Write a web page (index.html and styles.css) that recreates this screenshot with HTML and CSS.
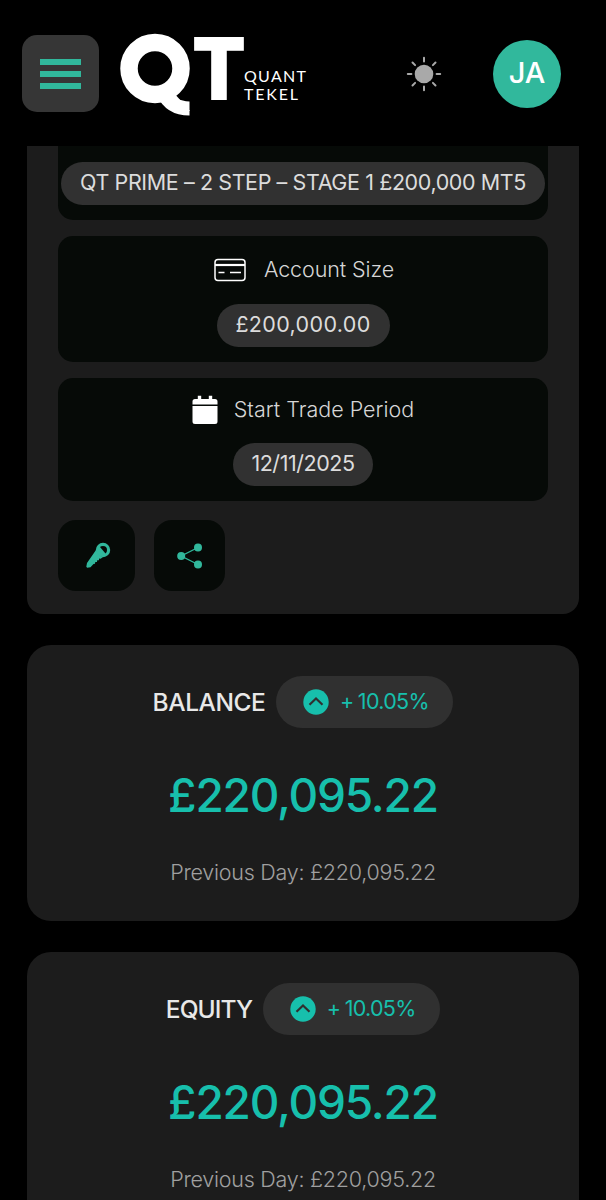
FILE: index.html
```html
<!DOCTYPE html>
<html lang="en">

<head>
    <meta charset="UTF-8">
    <meta name="viewport" content="width=device-width, initial-scale=1.0">
    <title>Quant Tekel</title>
    <link rel="stylesheet" href="styles.css">
</head>

<body>
    <header class="header">
        <button class="menu" aria-label="Menu">
            <span></span>
            <span></span>
            <span></span>
        </button>
        <svg class="logo" width="190" height="140" viewBox="0 0 190 140">
            <text class="logo-big logo-q" x="2" y="95" textLength="68" lengthAdjust="spacingAndGlyphs">Q</text>
            <text class="logo-big" x="72" y="96" textLength="54" lengthAdjust="spacingAndGlyphs">T</text>
            <!-- ring and tail of the mark -->
            <circle cx="35" cy="64.500" r="26" fill="none" stroke="#fff" stroke-width="17.500" />
            <path d="M43 88C48 99 57 104.500 69.500 104.500" fill="none" stroke="#fff" stroke-width="14" />
            <text class="logo-small" x="124" y="78" textLength="62">QUANT</text>
            <text class="logo-small" x="124" y="96" textLength="54">TEKEL</text>
        </svg>
        <svg class="sun" width="36" height="36" viewBox="0 0 36 36">
            <circle cx="18" cy="18" r="9.3" fill="#a9a9a9" />
            <path d="M18 1.8v3.6M18 30.6v3.6M1.8 18h3.6M30.6 18h3.6M6.5 6.5l2.6 2.6M26.9 26.9l2.6 2.6M6.5 29.5l2.6-2.6M26.9 9.1l2.6-2.6" stroke="#a9a9a9" stroke-width="2" stroke-linecap="round" />
        </svg>
        <div class="avatar">JA</div>
    </header>

    <main>
        <section class="panel">
            <div class="info info-plan">
                <div class="pill plan">QT PRIME – 2 STEP – STAGE 1 £200,000 MT5</div>
            </div>
            <div class="info info-size">
                <div class="label label-size">
                    <svg width="32" height="24" viewBox="0 0 32 24" fill="none" stroke="#fff">
                        <rect x="1" y="1.5" width="30" height="21" rx="3" stroke-width="1.5" />
                        <path d="M1 7h30" stroke-width="2.2" />
                        <path d="M4.5 14.5h6M16 14.5h11" stroke-width="1.5" />
                    </svg>
                    <span>Account Size</span>
                </div>
                <div class="pill size">£200,000.00</div>
            </div>
            <div class="info info-date">
                <div class="label">
                    <svg width="26" height="30" viewBox="0 0 26 30" fill="#fff">
                        <path d="M.5 9.5V6.5A2.5 2.5 0 0 1 3 4h2.8V.8h3.400V4h7.600V.8h3.400V4H23a2.500 2.500 0 0 1 2.500 2.500v3zM.5 11h25v15.500a2.500 2.500 0 0 1-2.500 2.500H3a2.500 2.500 0 0 1-2.500-2.500z" />
                    </svg>
                    <span>Start Trade Period</span>
                </div>
                <div class="pill date">12/11/2025</div>
            </div>
            <div class="actions">
                <button class="action key" aria-label="Credentials">
                    <svg width="28" height="28" viewBox="0 0 28 28">
                        <circle cx="19" cy="9" r="5.600" fill="none" stroke="#31b89c" stroke-width="3.200" />
                        <path d="M12 9l1.500 3.500 3 2.500 2.500 1-2.300 1.800-1.500-.2-.3 1.700-1.700-.1-.2 1.700-1.700.1-.3 1.800-1.500.3-3 3.100-3.300.5-.9-.9.700-3.800z" fill="#31b89c" />
                        <path d="M14 5l2 1 5.500 6.500-.5 3-5.500-1.500-3-4z" fill="#31b89c" />
                    </svg>
                </button>
                <button class="action share" aria-label="Share">
                    <svg width="28" height="28" viewBox="0 0 28 28">
                        <path d="M22 5.500L5.200 14 22 22.500" fill="none" stroke="#31b89c" stroke-width="1.300" />
                        <g fill="#31b89c">
                            <circle cx="22" cy="5.500" r="4" />
                            <circle cx="5.200" cy="14" r="4" />
                            <circle cx="22" cy="22.500" r="4" />
                        </g>
                    </svg>
                </button>
            </div>
        </section>

        <section class="stat">
            <div class="stat-head">
                <h2>BALANCE</h2>
                <div class="change">
                    <svg width="26" height="26" viewBox="0 0 26 26">
                        <circle cx="13" cy="13" r="12.700" fill="#17bfac" />
                        <path d="M6.500 15.800l6.500-6.300 6.500 6.300" fill="none" stroke="#303030" stroke-width="2.200" />
                    </svg>
                    <span>+ 10.05%</span>
                </div>
            </div>
            <p class="amount">£220,095.22</p>
            <p class="previous">Previous Day: £220,095.22</p>
        </section>

        <section class="stat">
            <div class="stat-head">
                <h2 class="equity">EQUITY</h2>
                <div class="change">
                    <svg width="26" height="26" viewBox="0 0 26 26">
                        <circle cx="13" cy="13" r="12.700" fill="#17bfac" />
                        <path d="M6.500 15.800l6.500-6.300 6.500 6.300" fill="none" stroke="#303030" stroke-width="2.200" />
                    </svg>
                    <span>+ 10.05%</span>
                </div>
            </div>
            <p class="amount">£220,095.22</p>
            <p class="previous">Previous Day: £220,095.22</p>
        </section>
    </main>
</body>

</html>
```
FILE: styles.css
```css
* {
    margin: 0;
    padding: 0;
    box-sizing: border-box;
}

html,
body {
    height: 1200px;
    overflow: hidden;
}

body {
    background: #000;
    color: #dcdcdc;
    font-family: Inter, "Liberation Sans", sans-serif;
    font-size: 21.5px;
}

button {
    border: 0;
}

svg {
    display: block;
    flex-shrink: 0;
}

.header {
    display: flex;
    align-items: center;
    height: 146px;
    padding: 1px 45px 0 22px;
}

.menu {
    display: flex;
    flex-direction: column;
    justify-content: center;
    align-items: center;
    gap: 6px;
    width: 77px;
    height: 77px;
    border-radius: 15px;
    background: #363636;
}

.menu span {
    width: 41px;
    height: 6px;
    background: #31b89c;
}

.logo {
    margin-left: 21px;
    fill: #fff;
}

.logo-big {
    font-family: Inter, sans-serif;
    font-size: 86px;
    font-weight: 900;
}

.logo-q {
    font-family: Lato, sans-serif;
    font-size: 86px;
    font-weight: 700;
}

.logo-small {
    font-family: Lato, sans-serif;
    font-size: 16px;
}

.sun {
    margin-left: 96px;
}

.avatar {
    width: 68px;
    height: 68px;
    margin-left: auto;
    border-radius: 50%;
    background: #31b89c;
    color: #fff;
    font-size: 29px;
    font-weight: 500;
    line-height: 66px;
    text-align: center;
}

.panel {
    width: 552px;
    height: 468px;
    margin: 0 auto 31px;
    padding: 0 31px;
    border-radius: 0 0 16px 16px;
    background: #1c1c1c;
}

.info {
    display: flex;
    flex-direction: column;
    align-items: center;
    margin-bottom: 16px;
    border-radius: 15px;
    background: #060a07;
}

.info-plan {
    height: 74px;
    padding-top: 16px;
    border-radius: 0 0 15px 15px;
}

.info-size {
    height: 126px;
    padding-top: 18px;
}

.info-date {
    height: 123px;
    padding-top: 16px;
    margin-bottom: 19px;
}

.label {
    display: flex;
    align-items: center;
    gap: 16px;
    height: 32px;
    color: #d6d6d6;
    font-weight: 350;
}

.label span {
    padding-bottom: 2px;
}

.label-size {
    gap: 18px;
    margin-left: 2px;
    letter-spacing: -0.1px;
}

.pill {
    height: 43px;
    border-radius: 22px;
    background: #313131;
    line-height: 40px;
    text-align: center;
    white-space: nowrap;
}

.plan {
    width: 484px;
    letter-spacing: -0.4px;
}

.size {
    width: 173px;
    margin-top: 18px;
    letter-spacing: 0.35px;
}

.date {
    width: 140px;
    margin-top: 17px;
    letter-spacing: -0.45px;
}

.actions {
    display: flex;
    gap: 18.5px;
}

.action {
    display: flex;
    justify-content: center;
    align-items: center;
    width: 71px;
    height: 71px;
    padding-left: 2px;
    border-radius: 18px;
    background: #060a07;
}

.key {
    width: 77px;
    padding-bottom: 2px;
}

.stat {
    width: 552px;
    height: 276px;
    margin: 0 auto 31px;
    padding-top: 31px;
    border-radius: 24px;
    background: #1c1c1c;
    text-align: center;
}

.stat-head {
    display: flex;
    justify-content: center;
    align-items: center;
    gap: 11px;
}

.stat-head h2 {
    color: #e8e8e8;
    font-size: 24.5px;
    font-weight: 500;
    letter-spacing: -0.45px;
    white-space: nowrap;
}

.stat-head .equity {
    letter-spacing: -0.9px;
}

.change {
    display: flex;
    justify-content: center;
    align-items: center;
    gap: 11px;
    width: 177px;
    height: 52px;
    padding-left: 2px;
    border-radius: 26px;
    background: #303030;
    color: #17bfac;
    letter-spacing: -0.7px;
    word-spacing: -1px;
    white-space: nowrap;
}

.change span {
    padding-bottom: 2px;
}

.amount {
    height: 60px;
    margin-top: 37px;
    color: #17bfac;
    font-size: 46px;
    font-weight: 500;
    letter-spacing: -1.2px;
    line-height: 60px;
}

.previous {
    margin-top: 32px;
    color: #a0a0a0;
    font-weight: 350;
    letter-spacing: -0.25px;
    line-height: 30px;
}
```
